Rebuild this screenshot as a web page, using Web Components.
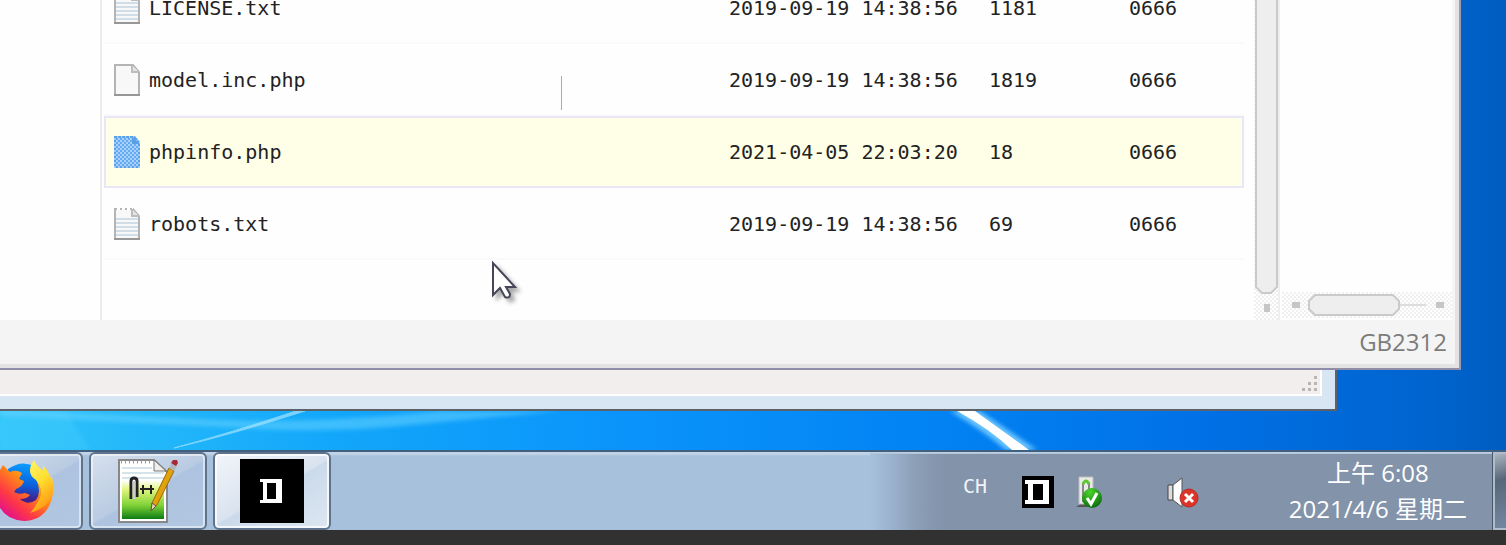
<!DOCTYPE html>
<html lang="zh-CN">
<head>
<meta charset="utf-8">
<title>Desktop</title>
<style>
body{margin:0;background:#313131;font-family:"Open Sans","Noto Sans CJK SC",sans-serif;overflow-x:hidden}
</style>
</head>
<body>
<desk-scene>
  <browser-window>
    <file-table></file-table>
    <span slot="status">GB2312</span>
  </browser-window>
  <back-window></back-window>
</desk-scene>
<task-bar>
  <task-button label="Firefox"><app-icon kind="firefox"></app-icon></task-button>
  <task-button label="Notepad++"><app-icon kind="notepad"></app-icon></task-button>
  <task-button label="Terminal" active><app-icon kind="block"></app-icon></task-button>
  <sys-tray slot="tray"></sys-tray>
</task-bar>
<script>
const define = (name, html) => customElements.define(name, class extends HTMLElement {
  connectedCallback() {
    if (this.shadowRoot) return;
    this.attachShadow({mode: 'open'}).innerHTML = typeof html === 'function' ? html(this) : html;
  }
});

define('desk-scene', `
<style>
:host{display:block;position:relative;background:linear-gradient(90deg,#31c4fa 0,#12a7fa 22%,#0b95fb 40%,#0284f4 61%,#0070e6 80%,#0064ce 95%,#005cc0 100%);padding-bottom:39px}
.paper{position:absolute;left:0;bottom:0;width:100%;height:39px}
.stack{position:relative}
.pointer{position:absolute;left:490px;top:260px;filter:drop-shadow(4px 4px 2px #0005)}
.caret{position:absolute;left:561px;top:76px;width:1px;height:34px;background:#aaa}
</style>
<svg class="paper" viewBox="0 0 1506 39" preserveAspectRatio="none" aria-hidden="true">
<defs><filter id="s" x="-20%" y="-50%" width="140%" height="200%"><feGaussianBlur stdDeviation="2"/></filter></defs>
<path d="M0 0H66L90 39H0Z" fill="#4ed3fb" opacity=".3" filter="url(#s)"/>
<path d="M0 -3V5Q150 12 260 18Q340 22 420 13L560 0H440Q300 14 200 8Q100 4 0 -3Z" fill="#6cd5ff" opacity=".5" filter="url(#s)"/>
<path d="M174 37Q230 24 305 0L296 0Q230 22 174 37Z" fill="#a6e4ff" stroke="#a6e4ff" opacity=".7"/>
<path d="M950 0H980L1037 39H1006Q984 20 950 0Z" fill="#6cc4ff" filter="url(#s)"/>
<path d="M957 0H975L1029 39H1012Q990 18 957 0Z" fill="#fff"/>
</svg>
<div class="stack"><slot></slot></div>
<div class="caret"></div>
<svg class="pointer" width="28" height="42" viewBox="0 0 28 42" aria-hidden="true"><path d="M3 3V35L10 28L15 37Q20 39 20 34L16 27H25Z" fill="#fff" stroke="#46465a" stroke-width="2"/></svg>`);

define('browser-window', `
<style>
:host{display:block;margin-right:45px;border-bottom:2px solid #8f8da8;border-right:2px solid #9c9bb0;background:#fefefe}
.frame{border-right:4px solid #e2e2e2;border-bottom:4px solid #e2e3e2}
.body{display:grid;grid-template-columns:100px minmax(0,1fr) 26px 172px;height:320px;overflow:hidden;border-right:3px solid #f5f5f5}
.list{border-left:2px solid #ececec;padding:0 10px 0 2px}
.v{display:flex;flex-direction:column;align-items:center;border-right:2px solid #eee;background:repeating-conic-gradient(#fff 0 25%,#f0f0f0 0 50%) 0 0/4px 4px}
.v svg{display:block}
.right{display:flex;flex-direction:column;justify-content:flex-end;padding:0 0 2px 2px}
.h{height:26px;background:repeating-conic-gradient(#fff 0 25%,#f0f0f0 0 50%) 0 0/4px 4px}
.h svg{display:block}
footer{display:flex;align-items:center;justify-content:flex-end;background:#f4f4f4;height:44px;padding:0 8px 0 0;font-size:24px;line-height:44px;color:#7c7c7c}
</style>
<div class="frame">
<div class="body">
<div class="side"></div>
<div class="list"><slot></slot></div>
<div class="v" aria-hidden="true"><svg width="24" height="320"><path d="M2 -2V287L8 293H17L23 287V-2Z" fill="#eee" stroke="#cacaca" stroke-width="2"/><path d="M10 304h6v8h-6z" fill="#c6c6c6"/></svg></div>
<div class="right"><div class="h" aria-hidden="true"><svg width="170" height="26"><path d="M10 10h8v6h-8zM154 10h8v6h-8z" fill="#c6c6c6"/><path d="M118 13H144" stroke="#ddd" stroke-width="2"/><path d="M33 3H111L117 9V17L111 23H33L27 17V9Z" fill="#eee" stroke="#cacaca" stroke-width="2"/></svg></div></div>
</div>
<footer><slot name="status"></slot></footer>
</div>`);

define('file-icon', el => {
  const k = el.getAttribute('kind');
  const body = '<path d="M1 1H19L25 8V31H1Z" fill="#f8f8f8" stroke="#b4b4b4" stroke-width="2"/>';
  const fold = '<path d="M18 1V8H25" fill="#e4e4e4" stroke="#bcbcbc" stroke-width="2"/><path d="M0 31H26" stroke="#979797" stroke-width="2"/>';
  const lines = '<path d="M2 11H24M2 15H24M2 19H24M2 23H24M2 27H24" stroke="#cfdde8" stroke-width="2"/><path d="M3 1h16" stroke="#fff" stroke-width="2" stroke-dasharray="3 2"/>';
  const sel = '<defs><pattern id="p" width="4" height="4" patternUnits="userSpaceOnUse"><path d="M0 0h4v4h-4z" fill="#a8d2fb"/><path d="M0 0h2v2h-2zM2 2h2v2h-2z" fill="#64aaf3"/></pattern></defs><path d="M0 0H21L26 6V32H0Z" fill="url(#p)"/><path d="M18 0L26 8H18Z" fill="#5a9fe5"/><path d="M1 1H20L25 7V31H1Z" fill="none" stroke="#5a9fe5" stroke-width="2" stroke-dasharray="2 2"/>';
  return `<style>:host{display:block;width:26px;height:32px}svg{display:block}</style><svg width="26" height="32" aria-hidden="true">${k === 'selected' ? sel : body + (k === 'text' ? lines : '') + fold}</svg>`;
});

const files = [
  ['LICENSE.txt', '2019-09-19 14:38:56', '1181', '0666', 'text'],
  ['model.inc.php', '2019-09-19 14:38:56', '1819', '0666', 'page'],
  ['phpinfo.php', '2021-04-05 22:03:20', '18', '0666', 'selected'],
  ['robots.txt', '2019-09-19 14:38:56', '69', '0666', 'text']
];
define('file-table', () => `
<style>
:host{display:block;margin-top:-28px;font:20px/16px "DejaVu Sans Mono","Liberation Mono",monospace;color:#222}
table{width:100%;table-layout:fixed;border-spacing:0}
td{box-sizing:border-box;height:72px;padding:2px 0 0;border-bottom:2px solid #fafafa;white-space:nowrap}
.date{width:260px}.size{width:140px}.perm{width:115px}
.name{display:flex;align-items:center;gap:9px;padding-left:10px}
.selected{background:#ffffe8;outline:2px solid #e9e7f7;outline-offset:-2px}
.selected td{border-color:#e9e7f7}
</style>
<table aria-label="Files"><colgroup><col><col class="date"><col class="size"><col class="perm"></colgroup><tbody>
${files.map(f => `<tr class="${f[4]}"><td><div class="name"><file-icon kind="${f[4]}"></file-icon><span>${f[0]}</span></div></td><td>${f[1]}</td><td>${f[2]}</td><td>${f[3]}</td></tr>`).join('')}
</tbody></table>`);

define('back-window', `
<style>
:host{display:block;margin-right:169px;background:#d8e5f2;border:solid #5c6268;border-width:0 2px 2px 0;padding:0 13px 13px 0}
.bar{height:24px;display:flex;justify-content:flex-end;align-items:flex-end;background:#f1eeed;border:solid #fff;border-width:0 2px 2px 0}
svg{display:block}
</style>
<div class="bar"><svg width="19" height="19" aria-hidden="true"><path d="M13 1h3v3h-3zM7 7h3v3h-3zM13 7h3v3h-3zM1 13h3v3h-3zM7 13h3v3h-3zM13 13h3v3h-3z" fill="#b8b5b4"/></svg></div>`);

define('task-bar', `
<style>
:host{display:flex;box-sizing:border-box;height:80px;overflow:hidden;justify-content:space-between;border-top:2px solid #41607f;background:linear-gradient(#c1d3e7 2px,#a7c0dc 4px)}
nav{display:flex;gap:6px;margin-left:-35px}
</style>
<nav><slot></slot></nav><slot name="tray"></slot>`);

define('task-button', el => `
<style>
:host{display:block;width:118px;height:78px}
button{display:flex;align-items:center;justify-content:center;width:100%;height:100%;padding:0;border:2px solid #5f738c;border-radius:6px;background:linear-gradient(150deg,#d7e0ee,#b9cbe2 50%,#adc3df 52%,#b2c7e1);box-shadow:inset 0 0 0 2px #ffffff80}
:host([active]) button{background:linear-gradient(150deg,#f2f5fa,#d9e3ef 50%,#cbdaea 52%,#dce6f1);box-shadow:inset 0 0 0 2px #ffffffc0}
</style><button type="button" aria-label="${el.getAttribute('label')}"><slot></slot></button>`);

const art = {
firefox: `<defs><linearGradient id="a" x1=".9" y1=".1" x2=".2" y2=".9"><stop offset="0" stop-color="#ffe23c"/><stop offset=".4" stop-color="#ff8a16"/><stop offset=".75" stop-color="#ff3647"/><stop offset="1" stop-color="#e31587"/></linearGradient><linearGradient id="b" x1=".5" y1="0" x2=".4" y2="1"><stop offset="0" stop-color="#0b9dff"/><stop offset=".5" stop-color="#0a5edb"/><stop offset=".8" stop-color="#44208e"/></linearGradient><linearGradient id="c" x1="0" y1="0" x2=".4" y2="1"><stop offset="0" stop-color="#fff36b"/><stop offset=".5" stop-color="#ffdf30"/><stop offset="1" stop-color="#ff9a13"/></linearGradient></defs>
<path d="M16 10Q30 0 44 8Q56 24 48 42Q36 52 24 45L14 28Z" fill="url(#b)"/>
<path d="M11 6L18 13Q24 10 30 14L27 20L32 22Q31 27 24 30L22 33Q27 36 33 34L38 36Q35 40 28 40Q36 47 44 41Q50 33 44 20L60 18Q62 26 61 34Q57 61 32 62Q6 60 4 34Q4 16 11 6Z" fill="url(#a)"/>
<path d="M42 1Q33 14 44 21Q54 33 45 44Q42 50 38 54Q62 47 61 28Q59 15 51 6V11Q45 8 42 1Z" fill="url(#c)"/>`,
notepad: `<defs><linearGradient id="g" y2="1" x2="0"><stop offset="0" stop-color="#fff"/><stop offset=".25" stop-color="#dff47c"/><stop offset=".65" stop-color="#7fd236"/><stop offset="1" stop-color="#0b7c14"/></linearGradient></defs>
<path d="M3 1H38L51 13V63H3Z" fill="#fff" stroke="#888" stroke-width="2"/><path d="M6 9H36M6 14H48M6 19H48" stroke="#d5e4ea" stroke-width="2"/><path d="M5 3H36" stroke="#999" stroke-width="3" stroke-dasharray="1 3"/>
<path d="M6 21H48V60H6Z" fill="url(#g)"/><path d="M38 1V12H50Z" fill="#eee" stroke="#777"/>
<path d="M15 40V22Q15 19 18 19T21 22V38" fill="none" stroke="#222" stroke-width="3"/><path d="M18 40V22" stroke="#ccc" stroke-width="3"/><path d="M24 30H38M27 26V35M35 26V35" stroke="#222" stroke-width="2"/>
<path d="M53 9L58 12L41 46L35 51L36 44Z" fill="#e2a20d" stroke="#9a6a08"/><path d="M36 44L40 47L35 52Z" fill="#ead4a8" stroke="#555"/><path d="M53 9L56 4L61 7L58 12Z" fill="#b0b7bd"/><path d="M55 4L57 1H61L62 4L60 7Z" fill="#a82835"/>`,
block: `<rect width="64" height="64"/><path fill="#fff" fill-rule="evenodd" d="M20 20H42V44H20V41H23V23H20ZM27 24V40H36V24Z"/>`,
blocksmall: `<rect width="64" height="64"/><path fill="#fff" fill-rule="evenodd" d="M6 8H54V56H6V48H12V16H6ZM22 16V48H42V16Z"/>`
};
define('app-icon', el => `<style>:host{display:block;width:64px;height:64px}:host([small]){width:32px;height:32px}svg{display:block;width:100%;height:100%}</style><svg viewBox="0 0 64 64" aria-hidden="true">${art[el.getAttribute('kind')]}</svg>`);

define('sys-tray', `
<style>
:host{display:flex;align-items:flex-start;width:636px;background:linear-gradient(#c1d3e7,#b0c2d6) 0 0/100% 2px no-repeat,linear-gradient(90deg,#a7c0dc,#9cb3d0 20px,#8c9fb7 45px,#8293aa 75px);color:#fff}
.ime{width:59px;margin:22px 0 0 93px;font:20px/24px "DejaVu Sans Mono",monospace;color:#f0f4f8}
app-icon{margin-top:24px}
svg{display:block}
.usb{margin:24px 0 0 22px}.vol{margin:24px 0 0 64px}
.clock{margin:3px 26px 0 auto;text-align:center;font-size:24px;line-height:36px;white-space:nowrap}
button{box-sizing:border-box;width:13px;height:78px;padding:0;border:2px solid #aebccb;border-width:2px 0 2px 2px;outline:1px solid #4b5869;background:linear-gradient(165deg,#aab3be,#58677a 35%,#7387a0)}
</style>
<span class="ime">CH</span>
<app-icon kind="blocksmall" small></app-icon>
<svg class="usb" width="26" height="33" aria-hidden="true"><defs><radialGradient id="q" cx=".4" cy=".2" r=".8"><stop offset="0" stop-color="#4bd52a"/><stop offset="1" stop-color="#0c6f10"/></radialGradient></defs><path d="M0 31H16L12 28H5Z" fill="#555"/><path d="M3 1H17V28H3Z" fill="#e8eae8" stroke="#bbb"/><path d="M7 26V8Q10 2 13 8V20" fill="none" stroke="#888" stroke-width="2"/><path d="M7 8Q10 2 13 8" fill="none" stroke="#5fc82d" stroke-width="3"/><circle cx="16" cy="22" r="10" fill="url(#q)"/><path d="M11 22L15 28L21 17" fill="none" stroke="#fff" stroke-width="3"/></svg>
<svg class="vol" width="34" height="33" aria-hidden="true"><path d="M2 9H7V24H2Z" fill="#ddd" stroke="#444"/><path d="M7 9L16 2V31L7 24Z" fill="#fff" stroke="#555"/><circle cx="23" cy="22" r="9" fill="#dc3528" stroke="#b82c25"/><path d="M19 18L27 26M27 18L19 26" stroke="#fff" stroke-width="3"/></svg>
<div class="clock"><div>上午 6:08</div><div>2021/4/6 星期二</div></div>
<button type="button" aria-label="Show desktop"></button>`);
</script>
</body>
</html>
